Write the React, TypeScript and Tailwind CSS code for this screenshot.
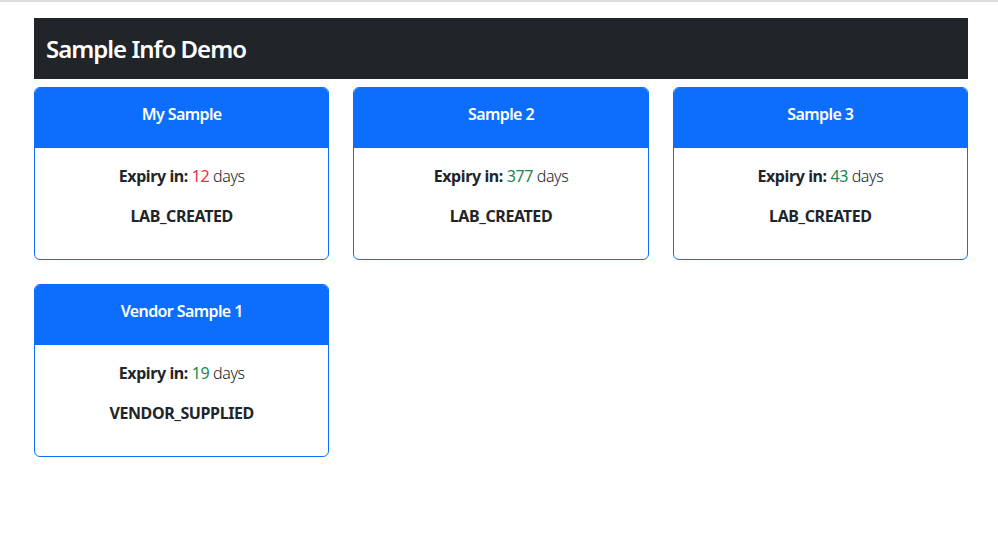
type Sample = {
  name: string;
  days: number;
  source: string;
};

const samples: Sample[] = [
  { name: 'My Sample', days: 12, source: 'LAB_CREATED' },
  { name: 'Sample 2', days: 377, source: 'LAB_CREATED' },
  { name: 'Sample 3', days: 43, source: 'LAB_CREATED' },
  { name: 'Vendor Sample 1', days: 19, source: 'VENDOR_SUPPLIED' },
];

function SampleCard({ sample }: { sample: Sample }) {
  // under 15 days shows as a warning
  const soon = sample.days < 15;
  return (
    <div className="rounded-[6px] border border-[#0d6efd] overflow-hidden bg-white">
      <div className="h-[60px] bg-[#0d6efd] pt-[14px] text-center">
        <span className="text-white font-semibold text-[16px] leading-6 tracking-[-0.6px]">{sample.name}</span>
      </div>
      <div className="px-4 pt-4 pb-[15px] text-center text-[#212529] text-[16px] leading-6 tracking-[-0.4px]">
        <p className="mb-4">
          <span className="font-bold">Expiry in:</span>{' '}
          <span className={soon ? 'text-[#dc3545]' : 'text-[#198754]'}>{sample.days}</span>{' '}
          <span className="font-light">days</span>
        </p>
        <p className="mb-4 font-bold">{sample.source}</p>
      </div>
    </div>
  );
}

export default function App() {
  return (
    <div
      className="min-h-[552px] bg-white border-t-2 border-[#dcdcdc] pt-4"
      style={{ fontFamily: '"Noto Sans", sans-serif' }}
    >
      <div className="w-[934px] ml-[34px]">
        <div className="h-[61px] bg-[#212529] flex items-center px-3">
          <h1 className="text-white text-[24px] font-semibold tracking-[-1px]">Sample Info Demo</h1>
        </div>
        <div className="mt-2 grid grid-cols-3 gap-6">
          {samples.map(s => (
            <SampleCard key={s.name} sample={s} />
          ))}
        </div>
      </div>
    </div>
  );
}
